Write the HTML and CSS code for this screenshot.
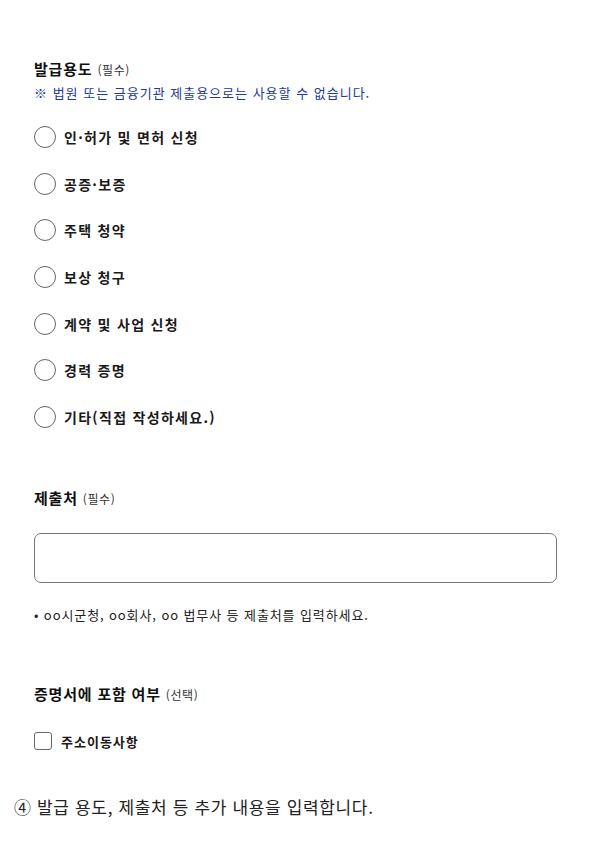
FILE: index.html
```html
<!DOCTYPE html>
<html lang="ko">
<head>
    <meta charset="UTF-8">
    <meta name="viewport" content="width=device-width, initial-scale=1.0">
    <title>발급용도 입력</title>
    <link rel="stylesheet" href="styles.css">
</head>
<body>
    <div class="form-area">
        <div class="field">
            <div class="field-title">발급용도 <span class="field-tag">(필수)</span></div>
            <p class="field-note">※ 법원 또는 금융기관 제출용으로는 사용할 수 없습니다.</p>
            <div class="radio-list">
                <label class="radio-row"><span class="radio"></span>인·허가 및 면허 신청</label>
                <label class="radio-row"><span class="radio"></span>공증·보증</label>
                <label class="radio-row"><span class="radio"></span>주택 청약</label>
                <label class="radio-row"><span class="radio"></span>보상 청구</label>
                <label class="radio-row"><span class="radio"></span>계약 및 사업 신청</label>
                <label class="radio-row"><span class="radio"></span>경력 증명</label>
                <label class="radio-row"><span class="radio"></span>기타(직접 작성하세요.)</label>
            </div>
        </div>

        <div class="field field-gap">
            <div class="field-title">제출처 <span class="field-tag">(필수)</span></div>
            <div class="text-box"></div>
            <p class="field-hint">• oo시군청, oo회사, oo 법무사 등 제출처를 입력하세요.</p>
        </div>

        <div class="field field-gap">
            <div class="field-title">증명서에 포함 여부 <span class="field-tag">(선택)</span></div>
            <label class="check-row"><span class="checkbox"></span>주소이동사항</label>
        </div>
    </div>

    <p class="step-caption">④ 발급 용도, 제출처 등 추가 내용을 입력합니다.</p>
</body>
</html>
```

FILE: styles.css
```css
body {
    margin: 0;
    font-family: "Noto Sans CJK KR", "Noto Sans", sans-serif;
    background: #fff;
    color: #111;
}

.form-area {
    padding: 59px 43px 0 34px;
}

.field-gap {
    margin-top: 60px;
}

.field-title {
    font-size: 15px;
    line-height: 20px;
    font-weight: 700;
    letter-spacing: 0.8px;
}

.field-tag {
    font-size: 12px;
    font-weight: 400;
    color: #333;
    letter-spacing: 0.6px;
}

.field-note {
    margin: 4px 0 0;
    font-size: 13px;
    line-height: 18px;
    color: #1c3a9a;
    letter-spacing: 1px;
}

.radio-list {
    display: flex;
    flex-direction: column;
    gap: 24.7px;
    margin-top: 24px;
}

.radio-row,
.check-row {
    display: flex;
    align-items: center;
    font-weight: 700;
    color: #1a1a1a;
}

.radio-row {
    height: 22px;
    font-size: 14px;
    letter-spacing: 1.3px;
}

.radio {
    width: 20px;
    height: 20px;
    border: 1px solid #666;
    border-radius: 50%;
    margin-right: 8px;
    flex-shrink: 0;
}

.text-box {
    height: 48px;
    margin-top: 24px;
    border: 1px solid #777;
    border-radius: 7px;
}

.field-hint {
    margin: 23px 0 0;
    font-size: 13px;
    line-height: 18px;
    color: #222;
    letter-spacing: 0.9px;
}

.check-row {
    margin-top: 27px;
    height: 18px;
    font-size: 13px;
    letter-spacing: 1px;
}

.checkbox {
    width: 16px;
    height: 16px;
    border: 1px solid #666;
    border-radius: 3px;
    margin-right: 9px;
    flex-shrink: 0;
}

.step-caption {
    margin: 45px 0 0 14px;
    font-size: 17px;
    line-height: 24px;
    color: #222;
    letter-spacing: 0.65px;
}
```
